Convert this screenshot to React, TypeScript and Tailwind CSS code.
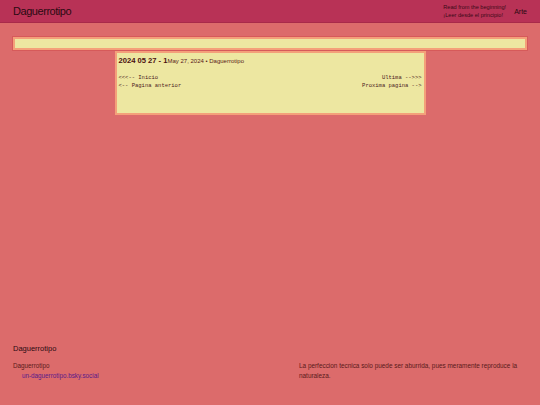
import React from "react";

const sans = { fontFamily: '"Liberation Sans", Arial, sans-serif' };

export default function App() {
  return (
    <div className="flex min-h-[405px] w-[540px] flex-col bg-[#dc6b6b] text-[#3a1010]" style={sans}>
      <header className="flex h-[23px] items-center justify-between border-b border-[#a82a4a] bg-[#b83256] pl-[13px] pr-[13px]">
        <div className="text-[11px] leading-none tracking-[-0.45px] text-[#2a0a12]">Daguerrotipo</div>
        <div className="flex items-center gap-[8px]">
          <div className="flex flex-col gap-[2px] text-[5.6px] leading-[6px] text-[#3a0a18]">
            <span>Read from the beginning!</span>
            <span>¡Leer desde el principio!</span>
          </div>
          <span className="text-[7px] leading-none text-[#2a0a12]">Arte</span>
        </div>
      </header>

      <main className="flex flex-col px-[13px] pt-[14px]">
        <div className="h-[13px] border-2 border-[#f4a07a] bg-[#ede7a1] outline outline-1 outline-[#d65a5a]" />

        <article className="mx-auto mt-[1px] w-[311px] border-2 border-[#f4a07a] bg-[#ede7a1] px-[2px] pb-[23px] pt-[2px]">
          <div className="flex items-baseline">
            <span className="text-[7.6px] font-bold text-[#4a1010]">2024 05 27 - 1</span>
            <span className="text-[6px] text-[#5a1a1a]">May 27, 2024 • Daguerrotipo</span>
          </div>
          <div
            className="mt-[8px] flex flex-col text-[5.5px] leading-[8px] text-[#4a2020]"
            style={{ fontFamily: '"Liberation Mono", "Courier New", monospace' }}
          >
            <div className="flex justify-between">
              <span>&lt;&lt;&lt;-- Inicio</span>
              <span>Ultima --&gt;&gt;&gt;</span>
            </div>
            <div className="flex justify-between">
              <span>&lt;-- Pagina anterior</span>
              <span>Proxima pagina --&gt;</span>
            </div>
          </div>
        </article>
      </main>

      <footer className="mt-auto flex flex-col px-[13px] pb-[24px]">
        <div className="text-[7.5px] text-[#2a0a12]">Daguerrotipo</div>
        <div className="mt-[7px] flex">
          <div className="flex w-[286px] flex-col text-[6.3px] leading-[10px]">
            <span className="text-[#5a1a1a]">Daguerrotipo</span>
            <span className="pl-[9px] text-[#5a1a8a]">un-daguerrotipo.bsky.social</span>
          </div>
          <div className="w-[222px] text-[6.4px] leading-[10px] text-[#5a1a1a]">
            La perfeccion tecnica solo puede ser aburrida, pues meramente reproduce la naturaleza.
          </div>
        </div>
      </footer>
    </div>
  );
}
